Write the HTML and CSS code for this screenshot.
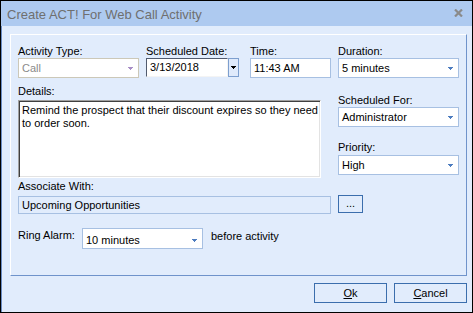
FILE: index.html
```html
<!DOCTYPE html>
<html>
<head>
<meta charset="utf-8">
<link rel="stylesheet" href="styles.css">
</head>
<body>
<div class="window">
  <div class="titlebar">
    <span class="title">Create ACT! For Web Call Activity</span>
    <svg class="close" width="9" height="8" viewBox="0 0 9 8"><path d="M1 0.5 L8 7.5 M8 0.5 L1 7.5" stroke="#8a8a8a" stroke-width="2.2"/></svg>
  </div>
  <div class="content">
    <div class="panel">
      <div class="main">
        <div class="left">
          <div class="row1">
            <div class="field f-type">
              <div class="lbl">Activity Type:</div>
              <div class="combo disabled"><span>Call</span><svg class="arrow" width="5" height="3" viewBox="0 0 5 3"><path d="M0 0h5v1h-1v1h-1v1h-1v-1h-1v-1h-1z" fill="#a88ec6"/></svg></div>
            </div>
            <div class="field f-date">
              <div class="lbl">Scheduled Date:</div>
              <div class="datepick">
                <div class="datebox">3/13/2018</div>
                <div class="datebtn"><svg width="5" height="3" viewBox="0 0 5 3"><path d="M0 0h5v1h-1v1h-1v1h-1v-1h-1v-1h-1z" fill="#000"/></svg></div>
              </div>
            </div>
            <div class="field f-time">
              <div class="lbl">Time:</div>
              <div class="textbox">11:43 AM</div>
            </div>
          </div>
          <div class="lbl lbl-details">Details:</div>
          <div class="memo">Remind the prospect that their discount expires so they need<br>to order soon.</div>
          <div class="lbl lbl-assoc">Associate With:</div>
          <div class="readonly">Upcoming Opportunities</div>
        </div>
        <div class="right">
          <div class="lbl">Duration:</div>
          <div class="combo"><span>5 minutes</span><svg class="arrow" width="5" height="3" viewBox="0 0 5 3"><path d="M0 0h5v1h-1v1h-1v1h-1v-1h-1v-1h-1z" fill="#4d7cbf"/></svg></div>
          <div class="lbl lbl-sched">Scheduled For:</div>
          <div class="combo"><span>Administrator</span><svg class="arrow" width="5" height="3" viewBox="0 0 5 3"><path d="M0 0h5v1h-1v1h-1v1h-1v-1h-1v-1h-1z" fill="#4d7cbf"/></svg></div>
          <div class="lbl lbl-prio">Priority:</div>
          <div class="combo"><span>High</span><svg class="arrow" width="5" height="3" viewBox="0 0 5 3"><path d="M0 0h5v1h-1v1h-1v1h-1v-1h-1v-1h-1z" fill="#4d7cbf"/></svg></div>
          <div class="btn btn-dots">...</div>
        </div>
      </div>
      <div class="alarm-row">
        <div class="lbl lbl-alarm">Ring Alarm:</div>
        <div class="combo combo-alarm"><span>10 minutes</span><svg class="arrow" width="5" height="3" viewBox="0 0 5 3"><path d="M0 0h5v1h-1v1h-1v1h-1v-1h-1v-1h-1z" fill="#4d7cbf"/></svg></div>
        <div class="lbl lbl-before">before activity</div>
      </div>
    </div>
    <div class="buttons">
      <div class="btn btn-main"><span class="u">O</span>k</div>
      <div class="btn btn-main"><span class="u">C</span>ancel</div>
    </div>
  </div>
</div>
</body>
</html>
```
FILE: styles.css
```css
html, body {
  margin: 0;
  padding: 0;
  background: #ffffff;
}
body {
  font-family: "Liberation Sans", Arial, sans-serif;
  font-size: 11px;
  color: #000;
}
.window {
  width: 473px;
  height: 313px;
  box-sizing: border-box;
  border: 1px solid #000;
  display: flex;
  flex-direction: column;
  background: #e1ecfc;
}
.titlebar {
  height: 25px;
  flex: none;
  background: #aecaf0;
  display: flex;
  align-items: center;
  justify-content: space-between;
  padding: 0 9px 0 6px;
}
.title {
  font-size: 13px;
  color: #6f6f6f;
  padding-top: 1px;
}
.close {
  display: block;
  margin-top: -2px;
}
.content {
  flex: 1;
  border-left: 1px solid #6a8cc4;
  display: flex;
  flex-direction: column;
}
.panel {
  margin: 8px 0 0 8px;
  width: 457px;
  height: 242px;
  box-sizing: border-box;
  border-top: 1px solid #ffffff;
  border-left: 1px solid #ffffff;
  border-right: 1px solid #6f93cb;
  border-bottom: 1px solid #6f93cb;
  padding: 9px 7px 0 7px;
}
.main {
  display: flex;
}
.left {
  width: 320px;
  display: flex;
  flex-direction: column;
}
.right {
  width: 121px;
  display: flex;
  flex-direction: column;
  align-items: stretch;
}
.row1 {
  display: flex;
}
.field {
  display: flex;
  flex-direction: column;
}
.f-type { width: 121px; margin-right: 7px; }
.f-date { width: 93px; margin-right: 11px; }
.f-time { width: 81px; }
.lbl {
  height: 14px;
  line-height: 14px;
  white-space: nowrap;
}
.combo {
  height: 20px;
  box-sizing: border-box;
  border: 1px solid #a7c0e2;
  background: #fff;
  display: flex;
  align-items: center;
  justify-content: space-between;
  padding: 0 5px 0 3px;
  line-height: 18px;
}
.combo.disabled {
  border-color: #ccc8b8;
  color: #8a8a8a;
}
.arrow {
  display: block;
  margin-top: 1px;
}
.datepick {
  display: flex;
  height: 19px;
}
.datebox {
  width: 82px;
  box-sizing: border-box;
  border-top: 1px solid #505a6e;
  border-left: 1px solid #505a6e;
  border-right: 1px solid #f4f4f4;
  border-bottom: 1px solid #f4f4f4;
  background: #fff;
  padding-left: 3px;
  line-height: 17px;
}
.datebtn {
  width: 11px;
  box-sizing: border-box;
  border: 1px solid #7d9fcf;
  background: #dfeafb;
  display: flex;
  align-items: center;
  justify-content: center;
}
.textbox {
  height: 20px;
  box-sizing: border-box;
  border: 1px solid #a7c0e2;
  background: #fff;
  padding-left: 3px;
  line-height: 18px;
}
.lbl-details {
  margin-top: 6px;
  margin-bottom: 2px;
}
.memo {
  height: 78px;
  width: 303px;
  box-sizing: border-box;
  border-top: 1px solid #a0a0a0;
  border-left: 1px solid #a0a0a0;
  border-right: 1px solid #ffffff;
  border-bottom: 1px solid #ffffff;
  box-shadow: inset 1px 1px 0 #404040, inset -1px -1px 0 #e3e3e3;
  background: #fff;
  padding: 3px 0 0 3px;
  line-height: 13px;
}
.lbl-assoc {
  margin-top: 1px;
  margin-bottom: 3px;
}
.readonly {
  height: 18px;
  width: 313px;
  box-sizing: border-box;
  border: 1px solid #a7c0e2;
  padding-left: 3px;
  line-height: 16px;
}
.lbl-sched {
  margin-top: 15px;
}
.lbl-prio {
  margin-top: 13px;
  margin-bottom: 1px;
}
.btn {
  box-sizing: border-box;
  border: 1px solid #3b6ead;
  background: #e1ecfc;
  text-align: center;
}
.btn-dots {
  margin-top: 20px;
  width: 25px;
  height: 18px;
  line-height: 14px;
}
.alarm-row {
  display: flex;
  align-items: flex-start;
  margin-top: 14px;
}
.lbl-alarm {
  width: 64px;
  margin-top: 0px;
}
.combo-alarm {
  width: 121px;
  height: 21px;
  padding-top: 2px;
}
.lbl-before {
  margin-left: 8px;
  margin-top: 1px;
}
.buttons {
  display: flex;
  justify-content: flex-end;
  gap: 7px;
  padding-right: 5px;
  margin-top: 7px;
}
.btn-main {
  width: 73px;
  height: 20px;
  line-height: 18px;
}
.u {
  text-decoration: underline;
}
```
